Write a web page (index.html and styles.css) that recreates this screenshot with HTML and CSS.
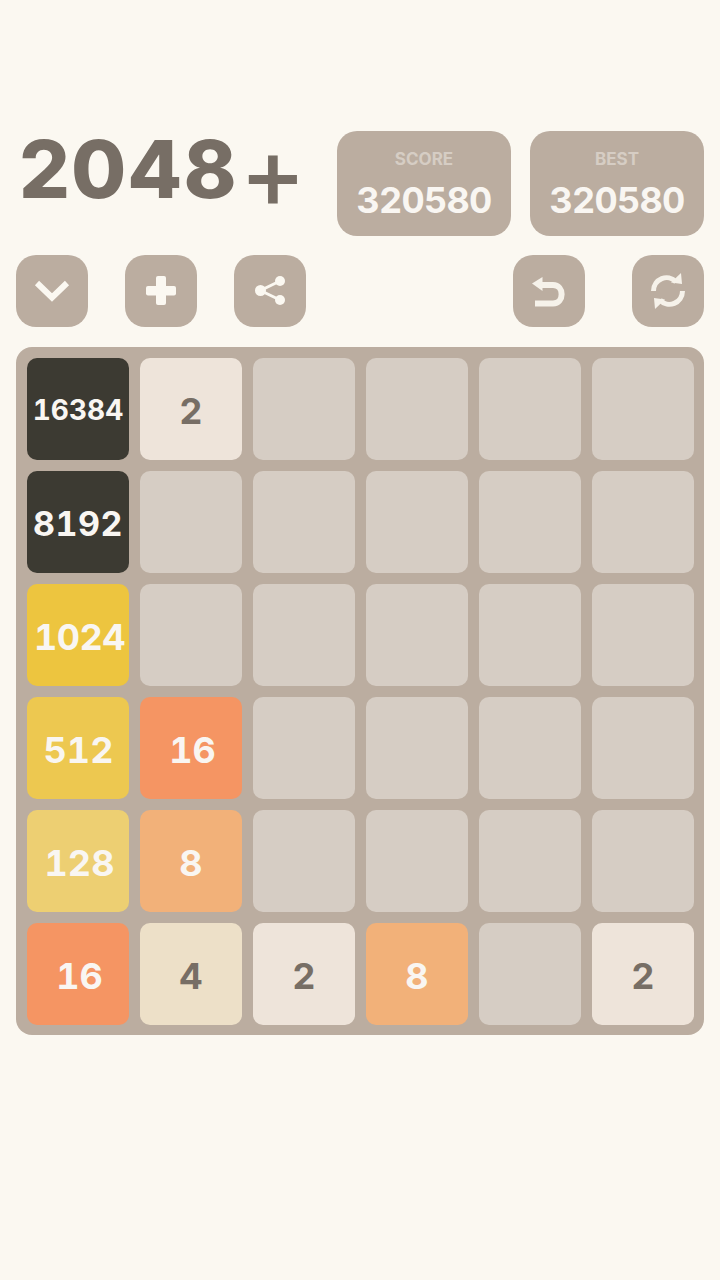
FILE: index.html
```html
<!DOCTYPE html>
<html lang="en">
<head>
<meta charset="utf-8">
<title>2048+</title>
<link rel="stylesheet" href="styles.css">
</head>
<body>
<main class="app">
  <header class="top">
    <h1 class="title">2048<span class="title-plus">+</span></h1>
    <div class="scores">
      <div class="score"><span class="score-label">SCORE</span><span class="score-value">320580</span></div>
      <div class="score"><span class="score-label">BEST</span><span class="score-value">320580</span></div>
    </div>
  </header>
  <nav class="actions">
    <div class="group-left">
      <button class="btn" aria-label="Menu"><svg viewBox="0 0 72 72" class="icon"><path d="M21 28 36 42.500 51 28" fill="none" stroke="#fbf8f1" stroke-width="6"/></svg></button>
      <button class="btn" aria-label="New"><svg viewBox="0 0 72 72" class="icon"><rect x="31" y="21" width="10" height="29" rx="2" fill="#fbf8f1"/><rect x="21" y="31" width="30" height="9.500" rx="2" fill="#fbf8f1"/></svg></button>
      <button class="btn" aria-label="Share"><svg viewBox="0 0 72 72" class="icon"><path d="M46 26 26.500 35.500 46 45" fill="none" stroke="#fbf8f1" stroke-width="3"/><circle cx="46" cy="26" r="5" fill="#fbf8f1"/><circle cx="46" cy="45" r="5" fill="#fbf8f1"/><circle cx="26.500" cy="35.500" r="5.500" fill="#fbf8f1"/></svg></button>
    </div>
    <div class="group-right">
      <button class="btn" aria-label="Undo"><svg viewBox="0 0 72 72" class="icon"><path d="M26 30H40C51.500 30 51.500 48.500 40 48.500H22" fill="none" stroke="#f6f2ea" stroke-width="6"/><path d="M29.500 22V36L19 28.500Z" fill="#f6f2ea"/></svg></button>
      <button class="btn" aria-label="Restart"><svg viewBox="0 0 72 72" class="icon"><path d="M21.500 36C21.500 24 36 18 44 27" fill="none" stroke="#f6f2ea" stroke-width="5"/><path d="M49 18 50 29 39 27.500Z" fill="#f6f2ea"/><path d="M50.500 36C50.500 48 36 54 28 45" fill="none" stroke="#f6f2ea" stroke-width="5"/><path d="M23 54 22 43 33 44.500Z" fill="#f6f2ea"/></svg></button>
    </div>
  </nav>
  <section class="board">
    <div class="tile t-16384">16384</div><div class="tile t-2">2</div><div class="tile"></div><div class="tile"></div><div class="tile"></div><div class="tile"></div>
    <div class="tile t-8192">8192</div><div class="tile"></div><div class="tile"></div><div class="tile"></div><div class="tile"></div><div class="tile"></div>
    <div class="tile t-1024">1024</div><div class="tile"></div><div class="tile"></div><div class="tile"></div><div class="tile"></div><div class="tile"></div>
    <div class="tile t-512">512</div><div class="tile t-16">16</div><div class="tile"></div><div class="tile"></div><div class="tile"></div><div class="tile"></div>
    <div class="tile t-128">128</div><div class="tile t-8">8</div><div class="tile"></div><div class="tile"></div><div class="tile"></div><div class="tile"></div>
    <div class="tile t-16">16</div><div class="tile t-4">4</div><div class="tile t-2">2</div><div class="tile t-8">8</div><div class="tile"></div><div class="tile t-2">2</div>
  </section>
</main>
</body>
</html>
```
FILE: styles.css
```css
* { box-sizing: border-box; }
html, body { margin: 0; padding: 0; }
body { background: #fbf8f1; font-family: Inter, "Liberation Sans", sans-serif; font-variant-numeric: tabular-nums; }
.app { width: 720px; height: 1280px; padding: 131px 16px 0; }
.top { display: flex; justify-content: space-between; align-items: flex-start; height: 105px; }
.title { margin: 0; padding-left: 3px; font-weight: 800; font-size: 80px; line-height: 76px; letter-spacing: 1px; color: #776e65; white-space: nowrap; font-variant-numeric: normal; }
.title-plus { padding-left: 2px; font-weight: 500; font-size: 100px; line-height: 0; vertical-align: -10px; letter-spacing: 0; }
.scores { display: flex; gap: 19px; }
.score { width: 174px; height: 105px; background: #bbada0; border-radius: 20px; display: flex; flex-direction: column; align-items: center; padding-top: 18px; }
.score-label { font-size: 17px; line-height: 20px; font-weight: 700; color: #d6cdc4; }
.score-value { margin-top: 9px; font-size: 36px; line-height: 44px; font-weight: 700; color: #f9f6f2; letter-spacing: -0.8px; }
.actions { display: flex; justify-content: space-between; margin-top: 19px; height: 72px; }
.group-left { display: flex; gap: 37px; }
.group-right { display: flex; gap: 47px; }
.btn { width: 72px; height: 72px; padding: 0; border: 0; border-radius: 20px; background: #bbada0; display: block; }
.icon { display: block; width: 72px; height: 72px; }
.board { margin-top: 20px; width: 688px; height: 688px; padding: 11px 10px 10px 11px; background: #bbada0; border-radius: 16px; display: grid; grid-template-columns: repeat(6, 102px); grid-auto-rows: 102px; gap: 11px; }
.tile { border-radius: 10px; background: #d6cdc4; display: flex; align-items: center; justify-content: center; padding-top: 3px; font-weight: 700; font-size: 36px; color: #f9f6f2; }
.t-2 { background: #eee4da; color: #776e65; }
.t-4 { background: #ede0c8; color: #776e65; }
.t-8 { background: #f2b179; }
.t-16 { background: #f59563; padding-left: 3px; }
.t-128 { background: #edcf72; padding-left: 3px; }
.t-512 { background: #edc850; padding-left: 1px; }
.t-1024 { background: #edc53f; padding-left: 3px; letter-spacing: -0.5px; }
.t-8192, .t-16384 { background: #3c3a32; }
.t-16384 { font-size: 28px; padding-top: 2px; }
.t-8192 { font-size: 34px; letter-spacing: 0.5px; }
```
